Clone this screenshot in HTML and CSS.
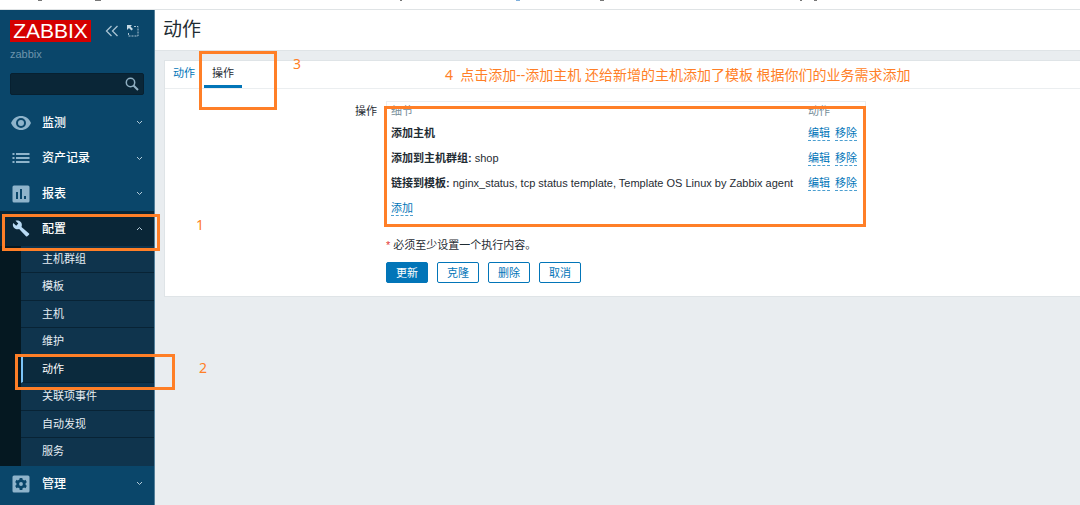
FILE: index.html
```html
<!DOCTYPE html>
<html lang="zh-CN">
<head>
    <meta charset="UTF-8">
    <meta name="viewport" content="width=device-width, initial-scale=1.0">
    <title>动作</title>

    <link rel="stylesheet" href="styles.css">
</head>
<body>
    <div class="top_strip">
        <svg width="820" height="2" viewBox="0 0 820 2" aria-hidden="true">
            <path d="M38 0h4M95 0h6M400 0h2M600 0h4M800 0h2M814 0h3" stroke="#777" stroke-width="2"/>
            <path d="M516 0h4" stroke="#7fb0dd" stroke-width="2"/>
        </svg>
    </div>

    <div class="wrapper">
        <aside class="sidebar">
            <div class="sidebar_head">
                <a href="#" class="logo">ZABBIX</a>
                <button type="button" class="icon_btn" aria-label="收起">
                    <svg width="14" height="12" viewBox="0 0 14 12"><path d="M6.500 1L1.500 6l5 5M12.500 1L7.500 6l5 5" fill="none" stroke="#a9c3d3" stroke-width="1.300"/></svg>
                </button>
                <button type="button" class="icon_btn" aria-label="隐藏">
                    <svg width="12" height="12" viewBox="0 0 12 12">
                        <path d="M7 1.500h4v9.500H1.500V7" fill="none" stroke="#a9c3d3" stroke-dasharray="2 1"/>
                        <path d="M0 0h5L3.500 1.500 6 4 4.500 5.500 2 3 0 5z" fill="#c7dae5"/>
                    </svg>
                </button>
            </div>
            <p class="server">zabbix</p>

            <form class="search">
                <input type="text" aria-label="搜索">
                <button type="button" aria-label="搜索">
                    <svg width="14" height="14" viewBox="0 0 14 14"><circle cx="5.500" cy="5.500" r="4.200" fill="none" stroke="#8fafc2" stroke-width="1.500"/><path d="M8.500 8.500L13 13" stroke="#8fafc2" stroke-width="2"/></svg>
                </button>
            </form>

            <ul class="menu">
                <li>
                    <a href="#">
                        <svg class="icon" viewBox="0 0 20 18"><path d="M0 9C2 4.500 5.500 2 10 2s8 2.500 10 7c-2 4.500-5.500 7-10 7S2 13.500 0 9z" fill="#8fb4cb"/><circle cx="10" cy="9" r="4" fill="none" stroke="#0a466a" stroke-width="2"/></svg>
                        <span>监测</span>
                        <svg class="arrow" viewBox="0 0 7 5"><path d="M1 1l2.500 2.500L6 1"/></svg>
                    </a>
                </li>
                <li>
                    <a href="#">
                        <svg class="icon" viewBox="0 0 20 18"><path d="M1.500 5h2M1.500 9h2M1.500 13h2M5 5h13.500M5 9h13.500M5 13h13.500" stroke="#8fb4cb" stroke-width="1.800"/></svg>
                        <span>资产记录</span>
                        <svg class="arrow" viewBox="0 0 7 5"><path d="M1 1l2.500 2.500L6 1"/></svg>
                    </a>
                </li>
                <li>
                    <a href="#">
                        <svg class="icon" viewBox="0 0 20 18"><rect x="1.500" y="0.500" width="17" height="17" rx="1.500" fill="#8fb4cb"/><path d="M6 7v7M10 4v10M14 11v3" stroke="#0a466a" stroke-width="2"/></svg>
                        <span>报表</span>
                        <svg class="arrow" viewBox="0 0 7 5"><path d="M1 1l2.500 2.500L6 1"/></svg>
                    </a>
                </li>
                <li class="open">
                    <a href="#">
                        <svg class="icon" viewBox="0 0 20 18"><path d="M18 13.500L10.500 7C11.300 4.800 10.800 3 9.500 1.800 8.200.5 6.200 0 4.500.7L7.300 3.500 5.200 5.700 2.300 3C1.400 4.800 1.900 6.700 3.200 8c1.300 1.200 3.200 1.600 4.900 1l6.900 7.300c.4.400.9.400 1.300 0l1.700-1.600c.4-.4.400-.9 0-1.200z" fill="#b9dbf5"/></svg>
                        <span>配置</span>
                        <svg class="arrow" viewBox="0 0 7 5"><path d="M1 4l2.500-2.500L6 4"/></svg>
                    </a>
                    <ul class="submenu">
                        <li><a href="#">主机群组</a></li>
                        <li><a href="#">模板</a></li>
                        <li><a href="#">主机</a></li>
                        <li><a href="#">维护</a></li>
                        <li class="on"><a href="#">动作</a></li>
                        <li><a href="#">关联项事件</a></li>
                        <li><a href="#">自动发现</a></li>
                        <li><a href="#">服务</a></li>
                    </ul>
                </li>
                <li>
                    <a href="#">
                        <svg class="icon" viewBox="0 0 20 18"><rect x="1.500" y="0.500" width="17" height="17" rx="1.500" fill="#8fb4cb"/><circle cx="10" cy="9" r="3.300" fill="none" stroke="#0a466a" stroke-width="2.800"/><path d="M10 3v2.500M10 12.500V15M4.800 6l2.200 1.200M13 10.800l2.200 1.200M4.800 12l2.200-1.200M13 7.200L15.200 6" stroke="#0a466a" stroke-width="2.800"/></svg>
                        <span>管理</span>
                        <svg class="arrow" viewBox="0 0 7 5"><path d="M1 1l2.500 2.500L6 1"/></svg>
                    </a>
                </li>
            </ul>
        </aside>

        <main class="content">
            <header class="title">
                <h1>动作</h1>
            </header>

            <section class="card">
                <nav class="tabs">
                    <a href="#">动作</a>
                    <a href="#" class="on">操作</a>
                </nav>

                <form class="form">
                    <div class="label">操作</div>
                    <div class="field">
                        <table>
                            <thead>
                                <tr><th>细节</th><th>动作</th></tr>
                            </thead>
                            <tbody>
                                <tr>
                                    <td><b>添加主机</b></td>
                                    <td><a href="#">编辑</a><a href="#">移除</a></td>
                                </tr>
                                <tr>
                                    <td><b>添加到主机群组:</b> shop</td>
                                    <td><a href="#">编辑</a><a href="#">移除</a></td>
                                </tr>
                                <tr>
                                    <td><b>链接到模板:</b> nginx_status, tcp status template, Template OS Linux by Zabbix agent</td>
                                    <td><a href="#">编辑</a><a href="#">移除</a></td>
                                </tr>
                                <tr>
                                    <td colspan="2"><a href="#">添加</a></td>
                                </tr>
                            </tbody>
                        </table>

                        <p class="note"><span>*</span> 必须至少设置一个执行内容。</p>

                        <div class="buttons">
                            <button type="button" class="primary">更新</button>
                            <button type="button">克隆</button>
                            <button type="button">删除</button>
                            <button type="button">取消</button>
                        </div>
                    </div>
                </form>
            </section>
        </main>
    </div>

    <!-- 步骤标注 -->
    <div class="mark mark1"></div>
    <div class="mark mark2"></div>
    <div class="mark mark3"></div>
    <div class="mark mark4"></div>
    <span class="step step1">1</span>
    <span class="step step2">2</span>
    <span class="step step3">3</span>
    <span class="step step4">4&nbsp; 点击添加--添加主机 还给新增的主机添加了模板 根据你们的业务需求添加</span>
</body>
</html>
```
FILE: styles.css
```css
* {
    margin:0;
    padding:0;
    box-sizing:border-box;
}

body {
    position:relative;
    display:flex;
    flex-direction:column;
    min-height:100vh;
    background:#e9edf0;
    color:#1f2c33;
    font-family:"Liberation Sans", "Noto Sans CJK SC", sans-serif;
    font-size:11px;
    line-height:16px;
}

ul, li {
    list-style:none;
}

a {
    color:#0275b8;
    text-decoration:none;
}

button, input {
    font-family:inherit;
    font-size:11px;
}

svg {
    display:block;
}

.top_strip {
    height:10px;
    background:#fff;
    border-bottom:1px solid #dfe3e5;
    overflow:hidden;
}

.wrapper {
    display:flex;
    flex:1;
}

/* 左侧菜单 */
.sidebar {
    width:155px;
    flex-shrink:0;
    background:#0a466a;
    border-right:1px solid #54809a;
}

.sidebar_head {
    display:flex;
    align-items:center;
    gap:8px;
    padding:10px 10px 0;
}

.logo {
    width:81px;
    flex-shrink:0;
    margin-right:6px;
    background:#d40000;
    color:#fff;
    font-size:21px;
    line-height:22px;
    text-align:center;
}

.icon_btn {
    background:none;
    border:0;
}

.server {
    padding:4px 10px 0;
    color:#6d94ac;
}

.search {
    display:flex;
    align-items:center;
    height:22px;
    margin:11px 10px 10px;
    padding-right:4px;
    background:#0a2637;
    border:1px solid #072030;
    border-radius:2px;
}

.search input {
    flex:1;
    min-width:0;
    padding-left:6px;
    background:none;
    border:0;
    color:#fff;
}

.search button {
    background:none;
    border:0;
}

.menu > li > a {
    display:flex;
    align-items:center;
    height:35px;
    padding:0 11px;
    color:#fff;
    font-size:12px;
}

.menu > li:nth-child(2) > a {
    height:36px;
}

.menu span {
    flex:1;
    font-weight:500;
}

.icon {
    width:20px;
    height:18px;
    margin-right:11px;
}

.arrow {
    width:7px;
    height:5px;
    fill:none;
    stroke:#b4cbd8;
}

.menu > .open {
    background:#051821;
}

.menu > .open > a {
    background:#0a2637;
}

.submenu {
    padding-left:21px;
}

.submenu a {
    display:block;
    height:27px;
    padding-left:21px;
    background:#0f344d;
    border-bottom:1px solid #082335;
    color:#e6eef3;
    line-height:27px;
}

.submenu li:nth-child(even) a {
    height:28px;
}

.submenu li:last-child a {
    border-bottom:0;
}

.submenu .on a {
    padding-left:19px;
    background:#0b2a3d;
    border-left:2px solid #7cc4f8;
    color:#fff;
}

/* 右侧内容 */
.content {
    flex:1;
    min-width:0;
}

.title {
    padding:6px 8px;
    background:#fff;
    border-bottom:1px solid #dfe4e7;
}

.title h1 {
    font-size:19px;
    font-weight:400;
    line-height:28px;
}

.card {
    margin:9px 0 0 9px;
    padding-bottom:13px;
    background:#fff;
    border:1px solid #dfe4e7;
    border-right:0;
}

.tabs {
    display:flex;
    gap:1px;
    border-bottom:1px solid #ebeef0;
}

.tabs a {
    height:27px;
    padding:0 8px;
    line-height:25px;
}

.tabs .on {
    border-bottom:3px solid #0275b8;
    color:#1f2c33;
}

.form {
    display:flex;
    gap:9px;
    padding-top:12px;
}

.label {
    width:212px;
    padding-top:2px;
    text-align:right;
}

.field {
    width:480px;
}

.field table {
    width:100%;
    padding-bottom:4px;
    border:1px solid #ebeef0;
    border-collapse:separate;
    border-spacing:0;
}

.field th {
    padding-left:4px;
    color:#768d99;
    font-weight:400;
    line-height:18px;
    text-align:left;
}

.field td {
    height:25px;
    padding-left:4px;
    white-space:nowrap;
}

.field th:last-child,
.field td:last-child:not([colspan]) {
    width:61px;
}

.field td a {
    display:inline-block;
    margin-right:5px;
    border-bottom:1px dashed #4c9fd0;
    line-height:14px;
}

.note {
    padding:12px 0 9px;
}

.note span {
    color:#e33734;
}

.buttons {
    display:flex;
    gap:9px;
}

.buttons button {
    width:42px;
    height:21px;
    background:#fff;
    border:1px solid #0275b8;
    border-radius:2px;
    color:#0275b8;
    line-height:18px;
}

.buttons .primary {
    background:#0275b8;
    color:#fff;
}

/* 标注框 */
.mark {
    position:absolute;
    border:3px solid #ff7f27;
    pointer-events:none;
}

.mark1 {
    left:2px;
    top:214px;
    width:158px;
    height:37px;
}

.mark2 {
    left:15px;
    top:354px;
    width:160px;
    height:36px;
}

.mark3 {
    left:199px;
    top:51px;
    width:78px;
    height:59px;
}

.mark4 {
    left:384px;
    top:106px;
    width:482px;
    height:121px;
}

.step {
    position:absolute;
    color:#ff7f27;
    font-family:"Noto Sans", "Noto Sans CJK SC", sans-serif;
    font-size:14px;
    line-height:20px;
    white-space:nowrap;
}

.step1 {
    left:196px;
    top:215px;
}

.step2 {
    left:199px;
    top:358px;
}

.step3 {
    left:293px;
    top:54px;
}

.step4 {
    left:445px;
    top:65px;
}
```
